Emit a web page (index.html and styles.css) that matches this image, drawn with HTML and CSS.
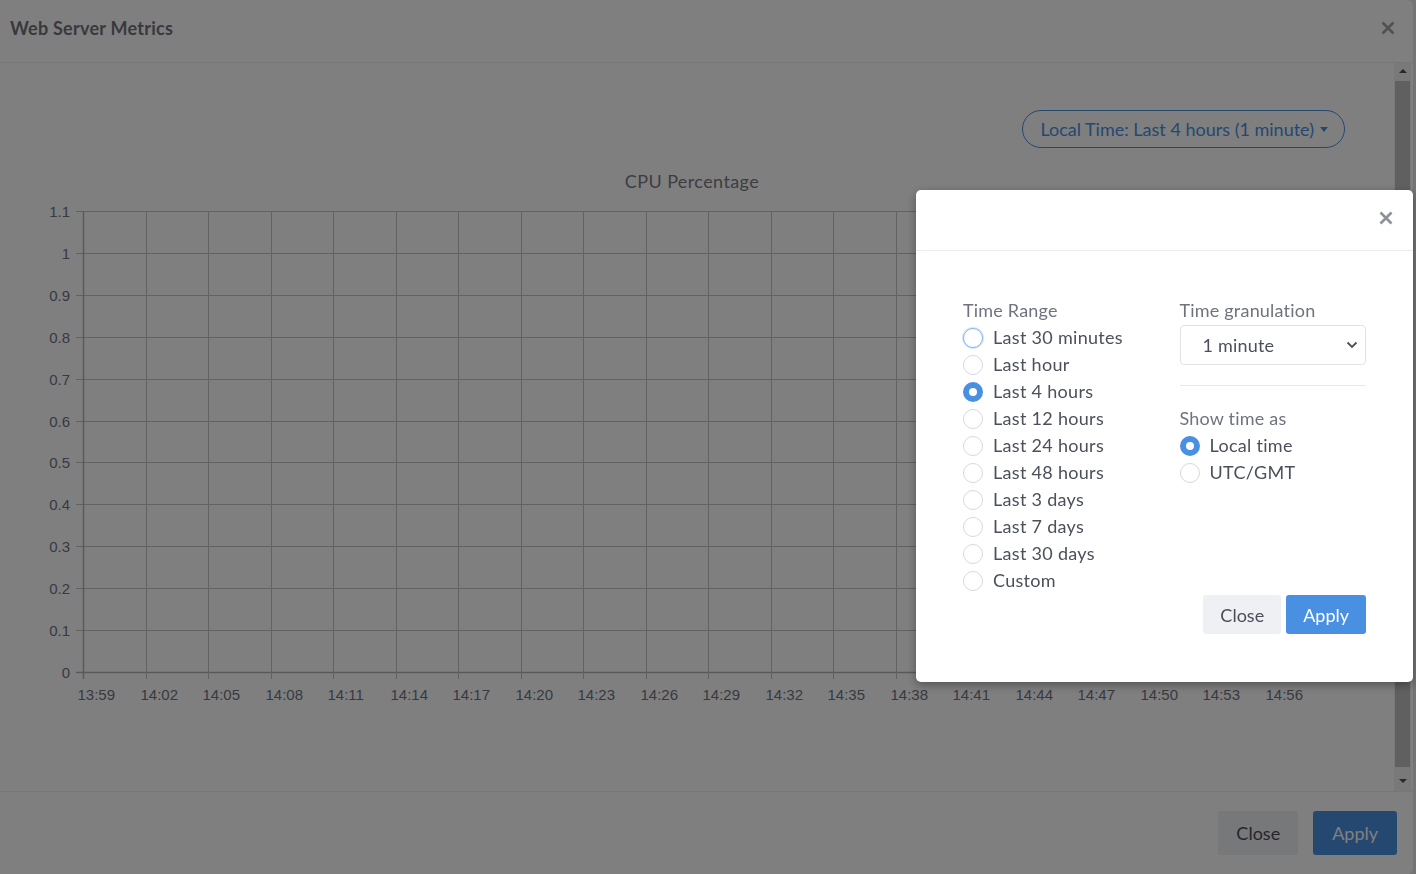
FILE: index.html
```html
<!DOCTYPE html>
<html lang="en">
<head>
    <meta charset="UTF-8">
    <meta name="viewport" content="width=device-width, initial-scale=1.0">
    <title>Web Server Metrics</title>
    <link rel="stylesheet" href="styles.css">
</head>
<body>
    <div class="metrics-modal">
        <header class="metrics-head">
            <h2>Web Server Metrics</h2>
            <button class="close-x" aria-label="Close">
                <svg width="14" height="14" viewBox="0 0 14 14"><path d="M1.5 1.5l11 11M12.5 1.5l-11 11"/></svg>
            </button>
        </header>

        <div class="metrics-body">
            <div class="metrics-content">
                <div class="range-bar">
                    <button class="range-toggle">Local Time: Last 4 hours (1 minute)<span class="caret"></span></button>
                </div>
                <svg id="cpuChart" class="chart" width="1290" height="560"></svg>
            </div>
            <div class="scrollbar">
                <span class="arrow arrow-up"></span>
                <span class="thumb"></span>
                <span class="arrow arrow-down"></span>
            </div>
        </div>

        <footer class="metrics-foot">
            <button class="btn btn-light btn-lg">Close</button>
            <button class="btn btn-primary btn-lg">Apply</button>
        </footer>
    </div>

    <div class="backdrop"></div>

    <div class="range-dialog">
        <div class="dialog-head">
            <button class="close-x" aria-label="Close">
                <svg width="14" height="14" viewBox="0 0 14 14"><path d="M1.5 1.5l11 11M12.5 1.5l-11 11"/></svg>
            </button>
        </div>
        <div class="dialog-body">
            <div class="range-grid">
                <div class="range-col">
                    <div class="field-label">Time Range</div>
                    <label class="radio"><input type="radio" name="range" class="focused"><span>Last 30 minutes</span></label>
                    <label class="radio"><input type="radio" name="range"><span>Last hour</span></label>
                    <label class="radio"><input type="radio" name="range" checked><span>Last 4 hours</span></label>
                    <label class="radio"><input type="radio" name="range"><span>Last 12 hours</span></label>
                    <label class="radio"><input type="radio" name="range"><span>Last 24 hours</span></label>
                    <label class="radio"><input type="radio" name="range"><span>Last 48 hours</span></label>
                    <label class="radio"><input type="radio" name="range"><span>Last 3 days</span></label>
                    <label class="radio"><input type="radio" name="range"><span>Last 7 days</span></label>
                    <label class="radio"><input type="radio" name="range"><span>Last 30 days</span></label>
                    <label class="radio"><input type="radio" name="range"><span>Custom</span></label>
                </div>
                <div class="range-col">
                    <div class="field-label">Time granulation</div>
                    <div class="select">
                        <span>1 minute</span>
                        <svg width="12" height="8" viewBox="0 0 12 8"><path d="M1.5 1.5l4.5 4.5 4.5-4.5"/></svg>
                    </div>
                    <hr>
                    <div class="field-label">Show time as</div>
                    <label class="radio"><input type="radio" name="zone" checked><span>Local time</span></label>
                    <label class="radio"><input type="radio" name="zone"><span>UTC/GMT</span></label>
                </div>
            </div>
            <div class="dialog-actions">
                <button class="btn btn-light">Close</button>
                <button class="btn btn-primary">Apply</button>
            </div>
        </div>
    </div>

    <script>
        // draw the empty CPU chart (grid, ticks and labels)
        const chart = document.getElementById('cpuChart');
        const ns = 'http://www.w3.org/2000/svg';
        const plot = { left: 36, right: 1286, top: 51, bottom: 512 };
        const stepX = 62.5;
        const yLabels = ['1.1', '1', '0.9', '0.8', '0.7', '0.6', '0.5', '0.4', '0.3', '0.2', '0.1', '0'];

        function add(tag, attrs, text) {
            const el = document.createElementNS(ns, tag);
            for (const key in attrs) el.setAttribute(key, attrs[key]);
            if (text) el.textContent = text;
            chart.appendChild(el);
            return el;
        }

        add('text', { x: 645, y: 21, class: 'chart-title' }, 'CPU Percentage');

        const stepY = (plot.bottom - plot.top) / (yLabels.length - 1);
        yLabels.forEach((label, i) => {
            const y = Math.round(plot.top + i * stepY) + 0.5;
            add('line', { x1: plot.left - 7, x2: plot.right, y1: y, y2: y, class: i === yLabels.length - 1 ? 'axis' : 'grid' });
            add('text', { x: plot.left - 13, y: y, class: 'y-label' }, label);
        });

        for (let i = 0; i <= 20; i++) {
            const x = Math.round(plot.left + i * stepX) + 0.5;
            add('line', { x1: x, x2: x, y1: plot.top, y2: i < 20 ? plot.bottom + 7 : plot.bottom, class: i === 0 ? 'axis' : 'grid' });
            if (i < 20) {
                const minutes = 13 * 60 + 59 + i * 3;
                const time = Math.floor(minutes / 60) + ':' + String(minutes % 60).padStart(2, '0');
                add('text', { x: x - 6, y: 534, class: 'x-label' }, time);
            }
        }
    </script>
</body>
</html>
```

FILE: styles.css
```css
* {
    margin: 0;
    padding: 0;
    box-sizing: border-box;
}

html {
    background-color: #e8e8e8;
}

body {
    font-family: Lato, "Noto Sans", sans-serif;
    color: #4b505a;
    width: 1416px;
    height: 874px;
    overflow: hidden;
}

button {
    font-family: inherit;
    border: none;
    background: none;
    cursor: pointer;
}

/* outer modal */
.metrics-modal {
    width: 1413px;
    height: 874px;
    background-color: #fff;
    border-radius: 0 6px 6px 0;
    display: flex;
    flex-direction: column;
}

.metrics-head {
    height: 63px;
    border-bottom: 1px solid #efefef;
    display: flex;
    align-items: center;
    justify-content: space-between;
    padding: 0 18px 6px 10px;
}

.metrics-head h2 {
    font-size: 18px;
    font-weight: 700;
    letter-spacing: 0.25px;
    color: #72737b;
}

.close-x {
    width: 14px;
    height: 14px;
    display: flex;
}

.close-x path {
    stroke: #a3a3a3;
    stroke-width: 2.6;
    fill: none;
}

.metrics-body {
    flex: 1;
    display: flex;
    min-height: 0;
}

.metrics-content {
    flex: 1;
    padding: 47px 49px 0 47px;
}

.range-bar {
    display: flex;
    justify-content: flex-end;
}

.range-toggle {
    height: 38px;
    border: 1px solid #4a90e2;
    border-radius: 19px;
    padding: 0 16px 0 17px;
    color: #4a90e2;
    font-size: 18px;
    display: flex;
    align-items: center;
}

.caret {
    margin-left: 6px;
    border-top: 5px solid #4a90e2;
    border-left: 4px solid transparent;
    border-right: 4px solid transparent;
}

.chart {
    display: block;
    margin-top: 12px;
}

.chart .grid {
    stroke: #c4c4c4;
    stroke-width: 1;
}

.chart .axis {
    stroke: #b4b4b4;
    stroke-width: 1.5;
}

.chart-title {
    font-family: Lato, sans-serif;
    font-size: 18px;
    letter-spacing: 0.4px;
    fill: #7b7b85;
    text-anchor: middle;
    dominant-baseline: central;
}

.y-label,
.x-label {
    font-family: "Liberation Sans", Arial, sans-serif;
    font-size: 15px;
    fill: #6f7483;
    dominant-baseline: central;
}

.y-label {
    text-anchor: end;
}

/* fake scrollbar of the modal body */
.scrollbar {
    width: 17px;
    margin-right: 2px;
    background-color: #f3f3f3;
    display: flex;
    flex-direction: column;
    align-items: center;
    padding: 6px 0;
}

.arrow {
    border-left: 4px solid transparent;
    border-right: 4px solid transparent;
}

.arrow-up {
    border-bottom: 4px solid #505050;
    margin: 0 0 8px;
}

.arrow-down {
    border-top: 4px solid #505050;
    margin: 12px 0 2px;
}

.thumb {
    flex: 1;
    width: 15px;
    background-color: #c1c1c1;
}

.metrics-foot {
    height: 83px;
    border-top: 1px solid #efefef;
    display: flex;
    justify-content: flex-end;
    align-items: flex-start;
    gap: 15px;
    padding: 19px 16px 0 0;
}

/* buttons */
.btn {
    font-size: 18px;
    height: 39px;
    padding: 0 17px;
    border-radius: 3px;
}

.btn-lg {
    height: 44px;
    padding: 0 18px;
}

.btn-lg.btn-primary {
    padding: 0 19px;
}

.btn-light {
    background-color: #eef0f4;
    color: #4b4d57;
}

.btn-primary {
    background-color: #4a90e2;
    color: #fff;
}

.backdrop {
    position: fixed;
    inset: 0;
    background-color: rgba(0, 0, 0, 0.5);
}

/* time range dialog */
.range-dialog {
    position: fixed;
    left: 916px;
    top: 190px;
    width: 497px;
    background-color: #fff;
    border-radius: 5px;
    box-shadow: 0 3px 10px rgba(0, 0, 0, 0.35);
}

.dialog-head {
    height: 61px;
    border-bottom: 1px solid #e9ecf3;
    display: flex;
    justify-content: flex-end;
    align-items: center;
    padding: 0 20px 4px 0;
}

.dialog-head .close-x path {
    stroke: #8d9097;
}

.dialog-body {
    padding: 46px 47px 48px;
}

.range-grid {
    display: grid;
    grid-template-columns: 1fr 1fr;
    gap: 30px;
}

.field-label {
    font-size: 18px;
    line-height: 27px;
    letter-spacing: 0.2px;
    color: #6e737d;
}

.radio {
    display: flex;
    align-items: center;
    gap: 10px;
    font-size: 18px;
    line-height: 27px;
    letter-spacing: 0.3px;
    color: #4b505a;
}

.radio input {
    appearance: none;
    width: 20px;
    height: 20px;
    border: 1px solid #d5d9df;
    border-radius: 50%;
    background-color: #fff;
}

.radio input:checked {
    border: 6.5px solid #4a90e2;
}

.radio input.focused {
    border-color: #84b6f0;
    box-shadow: 0 0 0 1px #d6e7fb;
}

.select {
    margin-top: 1px;
    height: 40px;
    border: 1px solid #dfe2e7;
    border-radius: 4px;
    display: flex;
    align-items: center;
    justify-content: space-between;
    padding: 0 7px 0 22px;
    font-size: 18px;
    letter-spacing: 0.2px;
    color: #4b505a;
}

.select path {
    stroke: #4b505a;
    stroke-width: 1.8;
    fill: none;
}

hr {
    border: none;
    border-top: 1px solid #e6e8ec;
    margin: 20px 0 19px;
}

.dialog-actions {
    margin-top: 1px;
    display: flex;
    justify-content: flex-end;
    gap: 5px;
}
```
